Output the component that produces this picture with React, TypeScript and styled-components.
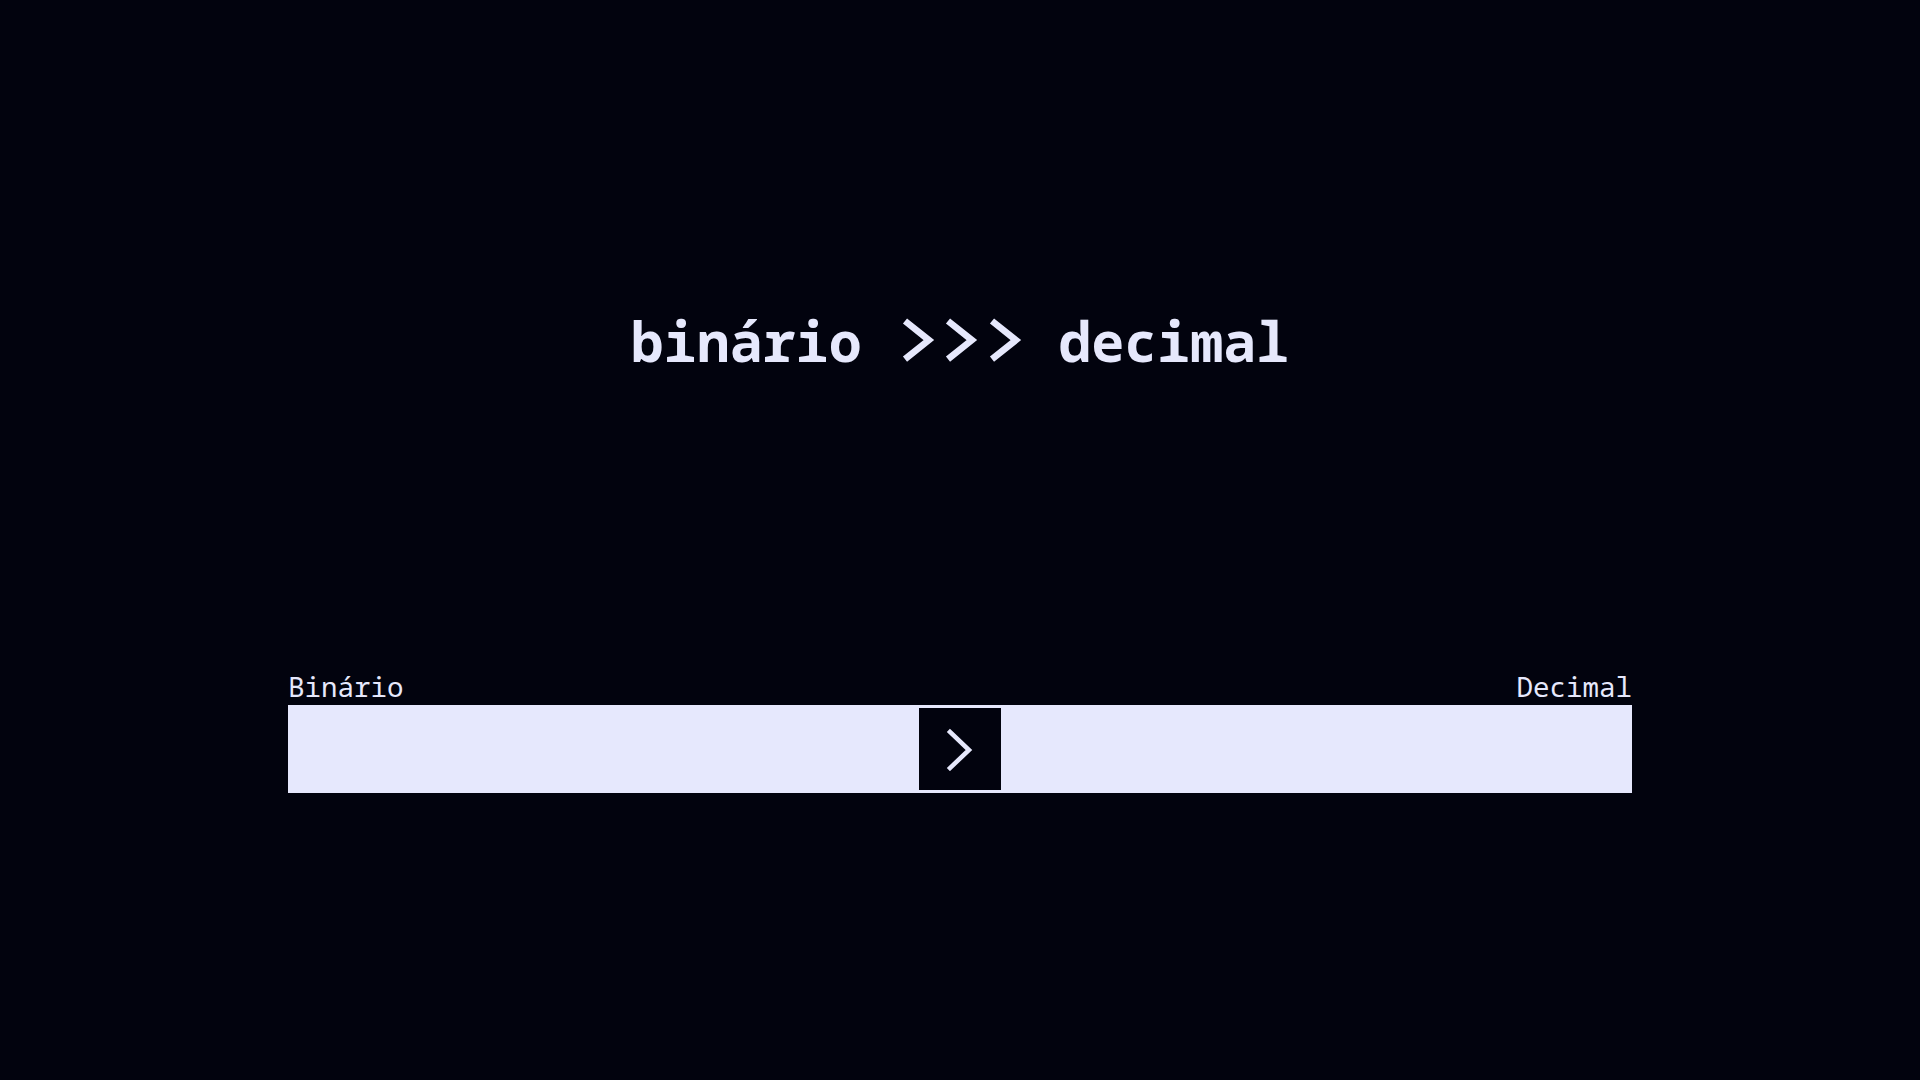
import React from "react";
import styled, { createGlobalStyle } from "styled-components";

const GlobalStyle = createGlobalStyle`
  html, body {
    margin: 0;
    padding: 0;
    background: #02030e;
  }
  body {
    font-family: "Noto Sans Mono", "DejaVu Sans Mono", monospace;
    color: #e6e8fc;
  }
`;

const Page = styled.main`
  min-height: 100vh;
  display: flex;
  flex-direction: column;
  align-items: center;
  box-sizing: border-box;
  padding-top: 301px;
`;

const Title = styled.h1`
  margin: 0;
  font-family: "Noto Sans Mono", "DejaVu Sans Mono", monospace;
  font-size: 55px;
  line-height: 80px;
  font-weight: 700;
  color: #e6e8fc;
  white-space: pre;
`;

const ChevronGlyph = styled.svg`
  display: inline-block;
  width: 43.5px;
  height: 44px;
  vertical-align: baseline;
`;

const Converter = styled.section`
  width: 1344px;
  margin-top: 287px;
  display: flex;
  flex-direction: column;
`;

const Labels = styled.div`
  display: flex;
  justify-content: space-between;
  font-size: 27.5px;
  line-height: 37px;
  color: #e6e8fc;
`;

const Track = styled.div`
  height: 88px;
  background: #e6e8fd;
  display: flex;
  align-items: center;
  justify-content: center;
`;

const SwapButton = styled.button`
  width: 82px;
  height: 82px;
  padding: 0;
  border: none;
  background: #02030e;
  display: flex;
  align-items: center;
  justify-content: center;
  cursor: pointer;
`;

function Chevron() {
  return (
    <ChevronGlyph viewBox="0 0 43.5 44" aria-hidden="true">
      <polyline
        points="10,3 33.9,22.1 10,41.2"
        fill="none"
        stroke="#e6e8fc"
        strokeWidth="6.6"
        strokeLinecap="butt"
        strokeLinejoin="miter"
      />
    </ChevronGlyph>
  );
}

export default function App() {
  return (
    <>
      <GlobalStyle />
      <Page>
        <Title aria-label="binário >>> decimal">
          {"binário "}
          <Chevron />
          <Chevron />
          <Chevron />
          {" decimal"}
        </Title>
        <Converter>
          <Labels>
            <span>Binário</span>
            <span>Decimal</span>
          </Labels>
          <Track>
            <SwapButton aria-label="converter">
              <svg width="30" height="44" viewBox="0 0 30 44">
                <polyline
                  points="5,5 24,23 5,41"
                  fill="none"
                  stroke="#e6e8fc"
                  strokeWidth="4.5"
                  strokeLinecap="square"
                  strokeLinejoin="miter"
                />
              </svg>
            </SwapButton>
          </Track>
        </Converter>
      </Page>
    </>
  );
}
